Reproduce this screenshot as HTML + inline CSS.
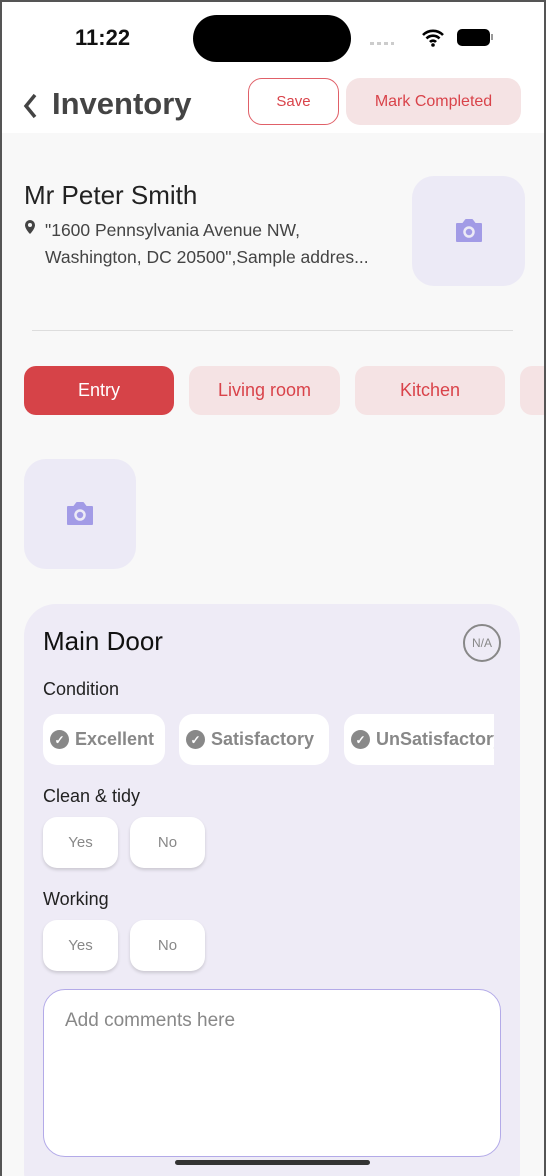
<!DOCTYPE html>
<html><head><style>
*{margin:0;padding:0;box-sizing:border-box}
html,body{width:546px;height:1176px;overflow:hidden}
body{background:#f8f8f8;font-family:"Liberation Sans",sans-serif;position:relative}
.a{position:absolute}
.hdr{left:0;top:0;width:546px;height:133px;background:#fff}
.btn{border-radius:14px;font-size:15px;color:#d9434a;display:flex;align-items:center;justify-content:center}
.cam{background:#eceaf6;border-radius:22px;display:flex;align-items:center;justify-content:center}
.tab{top:366px;height:49px;border-radius:12px;background:#f5e3e4;color:#d9434a;font-size:18px;display:flex;align-items:center;justify-content:center}
.chip{background:#fff;border-radius:14px;height:51px;top:714px;display:flex;align-items:center;font-size:18px;font-weight:bold;color:#888;padding-left:7px;white-space:nowrap;overflow:hidden}
.chk{flex:none;width:19px;height:19px;border-radius:50%;background:#888;color:#fff;font-size:12px;display:flex;align-items:center;justify-content:center;margin-right:6px}
.yn{background:#fff;border-radius:14px;width:75px;height:51px;box-shadow:0 2px 3px rgba(0,0,0,.15);font-size:15px;color:#888;display:flex;align-items:center;justify-content:center}
.lbl{font-size:18px;color:#222}
</style></head><body>
<div class="a hdr"></div>
<div class="a" style="left:75px;top:25px;font-size:22px;font-weight:bold;color:#111">11:22</div>
<div class="a" style="left:193px;top:15px;width:158px;height:47px;border-radius:24px;background:#000"></div>
<div class="a" style="left:370px;top:42px;width:24px;height:3px;background:repeating-linear-gradient(90deg,#ccc 0 4px,transparent 4px 7px)"></div>
<svg class="a" style="left:421px;top:28px" width="24" height="20" viewBox="0 0 24 20"><path d="M2 7a14 14 0 0 1 20 0M5.5 10.5a9 9 0 0 1 13 0M9 14a4 4 0 0 1 6 0" stroke="#000" stroke-width="2.6" fill="none"/><circle cx="12" cy="17" r="1.8"/></svg>
<div class="a" style="left:457px;top:29px;width:33px;height:17px;border-radius:5px;background:#000"></div>
<div class="a" style="left:491px;top:34px;width:2px;height:6px;background:#999"></div>
<svg class="a" style="left:22px;top:92px" width="16" height="28"><path d="M13 3L4 14l9 11" stroke="#444" stroke-width="3.5" fill="none"/></svg>
<div class="a" style="left:52px;top:86px;font-size:31px;font-weight:bold;color:#444">Inventory</div>
<div class="a btn" style="left:248px;top:78px;width:91px;height:47px;border:1.5px solid #e06068">Save</div>
<div class="a btn" style="left:346px;top:78px;width:175px;height:47px;background:#f5e3e4;font-size:16px">Mark Completed</div>
<div class="a" style="left:24px;top:180px;font-size:26px;color:#222">Mr Peter Smith</div>
<svg class="a" style="left:23px;top:219px" width="14" height="16"><path d="M7 1a5 5 0 0 1 5 5c0 4-5 9-5 9S2 10 2 6a5 5 0 0 1 5-5z" fill="#444"/><circle cx="7" cy="6" r="2" fill="#f8f8f8"/></svg>
<div class="a" style="left:45px;top:217px;font-size:17.5px;line-height:27px;color:#444">"1600 Pennsylvania Avenue NW,<br>Washington, DC 20500",Sample addres...</div>
<div class="a cam" style="left:412px;top:176px;width:113px;height:110px"><svg width="30" height="26" viewBox="0 0 30 26"><path d="M3 6h6l3-4h6l3 4h6v17H3z" fill="#a29be6" stroke="#a29be6" stroke-width="2" stroke-linejoin="round"/><circle cx="15" cy="14" r="4.5" fill="none" stroke="#eceaf6" stroke-width="2.5"/></svg></div>
<div class="a" style="left:32px;top:330px;width:481px;height:1px;background:#ddd"></div>
<div class="a tab" style="left:24px;width:150px;background:#d64348;color:#fff">Entry</div>
<div class="a tab" style="left:189px;width:151px">Living room</div>
<div class="a tab" style="left:355px;width:150px">Kitchen</div>
<div class="a tab" style="left:520px;width:40px"></div>
<div class="a cam" style="left:24px;top:459px;width:112px;height:110px"><svg width="30" height="26" viewBox="0 0 30 26"><path d="M3 6h6l3-4h6l3 4h6v17H3z" fill="#a29be6" stroke="#a29be6" stroke-width="2" stroke-linejoin="round"/><circle cx="15" cy="14" r="4.5" fill="none" stroke="#eceaf6" stroke-width="2.5"/></svg></div>
<div class="a" style="left:24px;top:604px;width:496px;height:600px;background:#eeebf6;border-radius:32px"></div>
<div class="a" style="left:43px;top:626px;font-size:26px;color:#111">Main Door</div>
<div class="a" style="left:463px;top:624px;width:38px;height:38px;border-radius:50%;border:2px solid #888;color:#888;font-size:12px;display:flex;align-items:center;justify-content:center">N/A</div>
<div class="a lbl" style="left:43px;top:679px">Condition</div>
<div class="a chip" style="left:43px;width:122px"><span class="chk">✓</span>Excellent</div>
<div class="a chip" style="left:179px;width:150px"><span class="chk">✓</span>Satisfactory</div>
<div class="a chip" style="left:344px;width:150px;border-radius:14px 0 0 14px"><span class="chk">✓</span>UnSatisfactory</div>
<div class="a lbl" style="left:43px;top:786px">Clean &amp; tidy</div>
<div class="a yn" style="left:43px;top:817px">Yes</div>
<div class="a yn" style="left:130px;top:817px">No</div>
<div class="a lbl" style="left:43px;top:889px">Working</div>
<div class="a yn" style="left:43px;top:920px">Yes</div>
<div class="a yn" style="left:130px;top:920px">No</div>
<div class="a" style="left:43px;top:989px;width:458px;height:168px;background:#fff;border:1.5px solid #b3aae8;border-radius:22px;padding:20px 21px;font-size:19px;color:#888">Add comments here</div>
<div class="a" style="left:175px;top:1160px;width:195px;height:5px;border-radius:3px;background:#333"></div>
<div class="a" style="left:0;top:0;width:546px;height:1176px;border:2px solid #555;border-bottom:none;pointer-events:none"></div>
</body></html>
